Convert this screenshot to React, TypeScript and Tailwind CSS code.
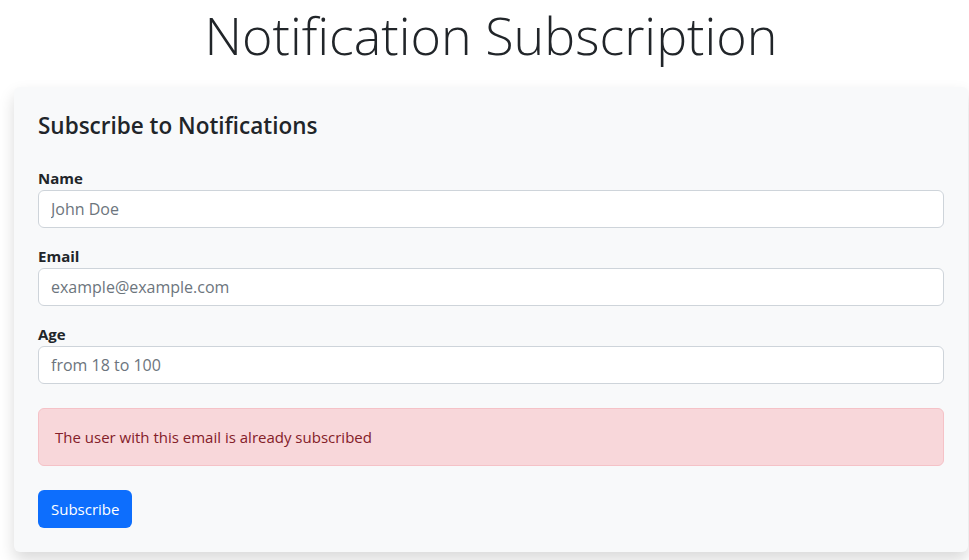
export default function App() {
  return (
    <div className="min-h-[560px] bg-white pl-[14px] pr-[1px] font-['Open_Sans',sans-serif] text-[#212529]">
      <h1 className="h-[87px] pt-[1px] text-center text-[52px] font-light leading-[68px]">
        Notification Subscription
      </h1>

      <div className="rounded-md bg-[#f8f9fa] p-6 shadow-[0_8px_16px_rgba(0,0,0,0.15)]">
        <h4 className="mb-[26px] text-[22.5px] font-semibold leading-[29px]">Subscribe to Notifications</h4>

        <form>
          <div className="mb-4">
            <label className="block text-[15px] font-bold leading-6">Name</label>
            <input
              className="block h-[38px] w-full rounded-md border border-[#ced4da] bg-white px-3 text-base placeholder:text-[#6c757d]"
              placeholder="John Doe"
            />
          </div>
          <div className="mb-4">
            <label className="block text-[15px] font-bold leading-6">Email</label>
            <input
              className="block h-[38px] w-full rounded-md border border-[#ced4da] bg-white px-3 text-base placeholder:text-[#6c757d]"
              placeholder="example@example.com"
            />
          </div>
          <div className="mb-6">
            <label className="block text-[15px] font-bold leading-6">Age</label>
            <input
              className="block h-[38px] w-full rounded-md border border-[#ced4da] bg-white px-3 text-base placeholder:text-[#6c757d]"
              placeholder="from 18 to 100"
            />
          </div>

          <div className="mb-6 rounded-md border border-[#f5c2c7] bg-[#f8d7da] p-4 text-[15px] leading-6 text-[#842029]">
            The user with this email is already subscribed
          </div>

          <button
            type="button"
            className="h-[38px] rounded-md bg-[#0d6efd] px-[13px] text-[15px] text-white"
          >
            Subscribe
          </button>
        </form>
      </div>
    </div>
  );
}
